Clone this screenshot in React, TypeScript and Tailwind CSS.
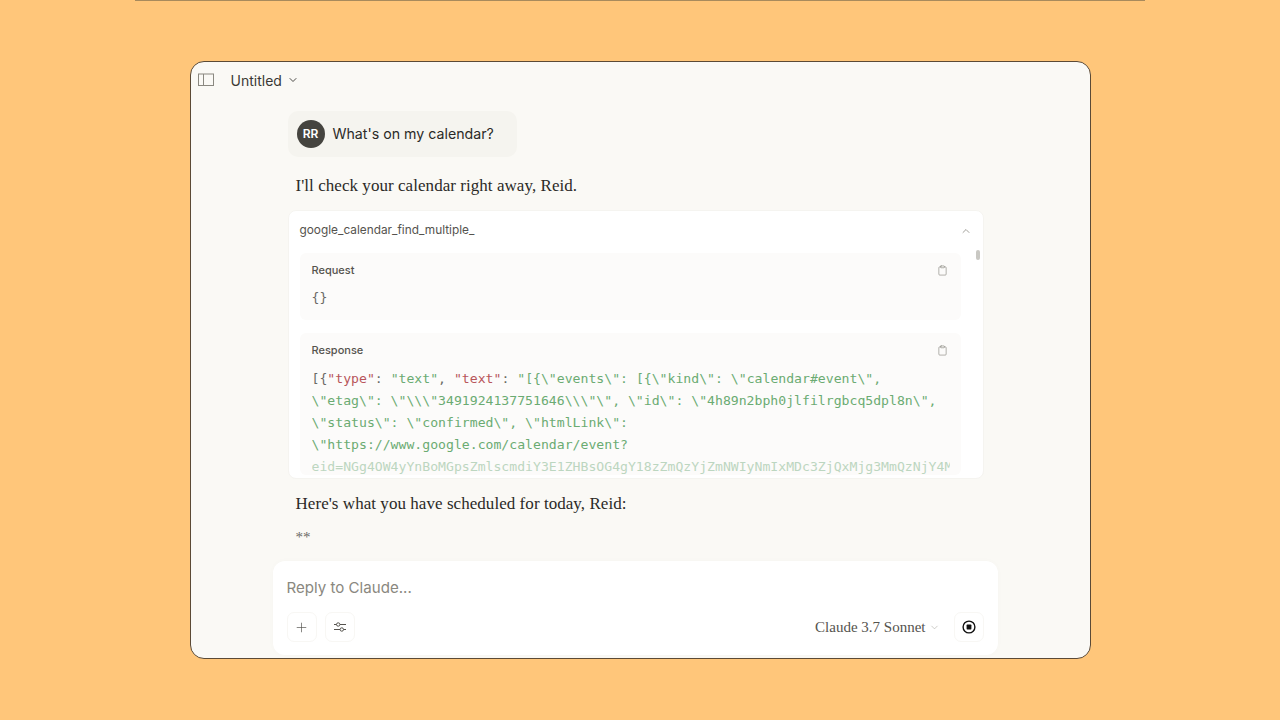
import React from "react";
import { ChevronDown, ChevronUp, Clipboard, Plus } from "lucide-react";

const serif = "font-['Liberation_Serif',serif]";
const mono = "font-['DejaVu_Sans_Mono',monospace]";

const Green = ({ children }: { children: React.ReactNode }) => (
  <span className="text-[#6bab72]">{children}</span>
);
const Red = ({ children }: { children: React.ReactNode }) => (
  <span className="text-[#b8565a]">{children}</span>
);

const SidebarIcon = () => (
  <svg width="16" height="14" viewBox="0 0 16 14" fill="none" stroke="#8a8880" strokeWidth="1">
    <rect x="0.5" y="1" width="15" height="11.5" />
    <path d="M5.5 1v11.5" />
  </svg>
);

const SlidersIcon = () => (
  <svg width="14" height="14" viewBox="0 0 14 14" fill="none" stroke="#55534e" strokeWidth="1">
    <path d="M1 4.5h2.5M7 4.5h6M1 9.5h6M10.5 9.5H13" />
    <circle cx="5.2" cy="4.5" r="1.7" />
    <circle cx="8.8" cy="9.5" r="1.7" />
  </svg>
);

const RecordIcon = () => (
  <svg width="14" height="14" viewBox="0 0 14 14" fill="none">
    <circle cx="7" cy="7" r="5.9" stroke="#111" strokeWidth="1.4" />
    <rect x="4.6" y="4.6" width="4.8" height="4.8" rx="0.6" fill="#111" />
  </svg>
);

const PanelLabel = ({ label }: { label: string }) => (
  <div className="flex items-center justify-between pr-[13px]">
    <span className="font-['Inter',sans-serif] text-[11px] font-medium leading-4 text-[#55534e]">{label}</span>
    <Clipboard size={11} strokeWidth={1.4} className="text-[#8a8880]" />
  </div>
);

export default function App() {
  return (
    <div className="flex h-[720px] w-[1280px] flex-col items-center overflow-hidden bg-[#ffc67a]">
      <div className="h-px w-[1010px] shrink-0 bg-[#a88a5c]" />
      <div className="mt-[60px] flex h-[598px] w-[901px] shrink-0 flex-col overflow-hidden rounded-[14px] border border-[#5b4a36] bg-[#faf9f5]">
        <header className="flex h-[36px] shrink-0 items-center pl-[7px]">
          <SidebarIcon />
          <span className="ml-[17px] font-['Inter',sans-serif] text-[14px] text-[#3a3935]">Untitled</span>
          <ChevronDown size={12} strokeWidth={1.8} className="ml-[5px] text-[#3a3935]" />
        </header>

        <main className="relative min-h-0 flex-1">
          <div className="ml-[97px] flex w-[696px] flex-col">
            <div className="mt-[13px] flex h-[46px] w-[229px] items-center rounded-[10px] bg-[#f5f4ef] pl-[9px]">
              <div className="flex h-[28px] w-[28px] items-center justify-center rounded-full bg-[#45443f] font-['Inter',sans-serif] text-[12px] font-semibold text-white">
                RR
              </div>
              <span className="ml-[8px] font-['Inter',sans-serif] text-[14.2px] text-[#2b2a27]">What's on my calendar?</span>
            </div>

            <p className={`${serif} ml-[8px] mt-[17px] text-[17px] leading-[23px] tracking-[0.05px] text-[#2b2a27]`}>
              I'll check your calendar right away, Reid.
            </p>

            <section className="relative mt-[13px] h-[269px] overflow-hidden rounded-[8px] border border-[#f5f4f0] bg-white">
              <div className="flex h-[38px] items-center justify-between pl-[11px] pr-[11px] pt-[1px]">
                <span className="font-['Inter',sans-serif] text-[11.85px] text-[#55534e]">google_calendar_find_multiple_</span>
                <ChevronUp size={12} strokeWidth={1.6} className="text-[#8a8880]" />
              </div>

              <div className="ml-[11px] mr-[22px] mt-[4px] h-[67px] rounded-[6px] bg-[#fcfbfa] pl-[12px] pt-[9px]">
                <PanelLabel label="Request" />
                <div className={`${mono} mt-[9px] text-[13.15px] leading-[22px] text-[#6b6a65]`}>{"{}"}</div>
              </div>

              <div className="ml-[11px] mr-[22px] mt-[13px] h-[142px] overflow-hidden rounded-[6px] bg-[#fcfbfa] pl-[12px] pt-[9px]">
                <PanelLabel label="Response" />
                <div className={`${mono} mt-[10px] h-[107px] overflow-hidden whitespace-pre text-[13.15px] leading-[22px] text-[#6bab72]`}>
                  <div>
                    <span className="text-[#6b6a65]">{"[{"}</span>
                    <Red>"type"</Red>
                    <span className="text-[#6b6a65]">: </span>
                    <Green>"text"</Green>
                    <span className="text-[#6b6a65]">, </span>
                    <Red>"text"</Red>
                    <span className="text-[#6b6a65]">: </span>
                    {'"[{\\"events\\": [{\\"kind\\": \\"calendar#event\\",'}
                  </div>
                  <div>{'\\"etag\\": \\"\\\\\\"3491924137751646\\\\\\"\\", \\"id\\": \\"4h89n2bph0jlfilrgbcq5dpl8n\\",'}</div>
                  <div>{'\\"status\\": \\"confirmed\\", \\"htmlLink\\":'}</div>
                  <div>{'\\"https://www.google.com/calendar/event?'}</div>
                  <div className="w-[638px] overflow-hidden text-[#bcd6c0]">eid=NGg4OW4yYnBoMGpsZmlscmdiY3E1ZHBsOG4gY18zZmQzYjZmNWIyNmIxMDc3ZjQxMjg3MmQzNjY4M</div>
                </div>
              </div>

              <div className="absolute right-[3px] top-[39px] h-[10px] w-[4px] rounded-full bg-[#c9c8c3]" />
            </section>

            <p className={`${serif} ml-[8px] mt-[13px] text-[17px] leading-[23px] tracking-[0.05px] text-[#2b2a27]`}>
              Here's what you have scheduled for today, Reid:
            </p>
            <p className={`${serif} ml-[8px] mt-[11px] text-[15px] leading-[22px] text-[#6b6a65]`}>**</p>
          </div>

          {/* composer floats over the conversation */}
          <div className="absolute bottom-[3px] left-[82px] h-[94px] w-[725px] rounded-[12px] bg-white shadow-[0_0_6px_rgba(0,0,0,0.02)]">
            <div className="pl-[14px] pt-[17px] font-['Inter',sans-serif] text-[15.1px] leading-5 text-[#8a8880]">Reply to Claude...</div>
            <div className="mt-[14px] flex items-center pl-[14px] pr-[14px]">
              <div className="flex h-[30px] w-[30px] items-center justify-center rounded-[7px] border border-[#f8f7f4]">
                <Plus size={15} strokeWidth={1.1} className="text-[#55534e]" />
              </div>
              <div className="ml-[8px] flex h-[30px] w-[30px] items-center justify-center rounded-[7px] border border-[#f8f7f4]">
                <SlidersIcon />
              </div>
              <div className="ml-auto flex items-center">
                <span className={`${serif} text-[15px] text-[#55534e]`}>Claude 3.7 Sonnet</span>
                <ChevronDown size={11} strokeWidth={1.2} className="ml-[3px] text-[#a5a39c]" />
              </div>
              <div className="ml-[14px] flex h-[30px] w-[30px] items-center justify-center rounded-[7px] border border-[#f8f7f4]">
                <RecordIcon />
              </div>
            </div>
          </div>
        </main>
      </div>
    </div>
  );
}
